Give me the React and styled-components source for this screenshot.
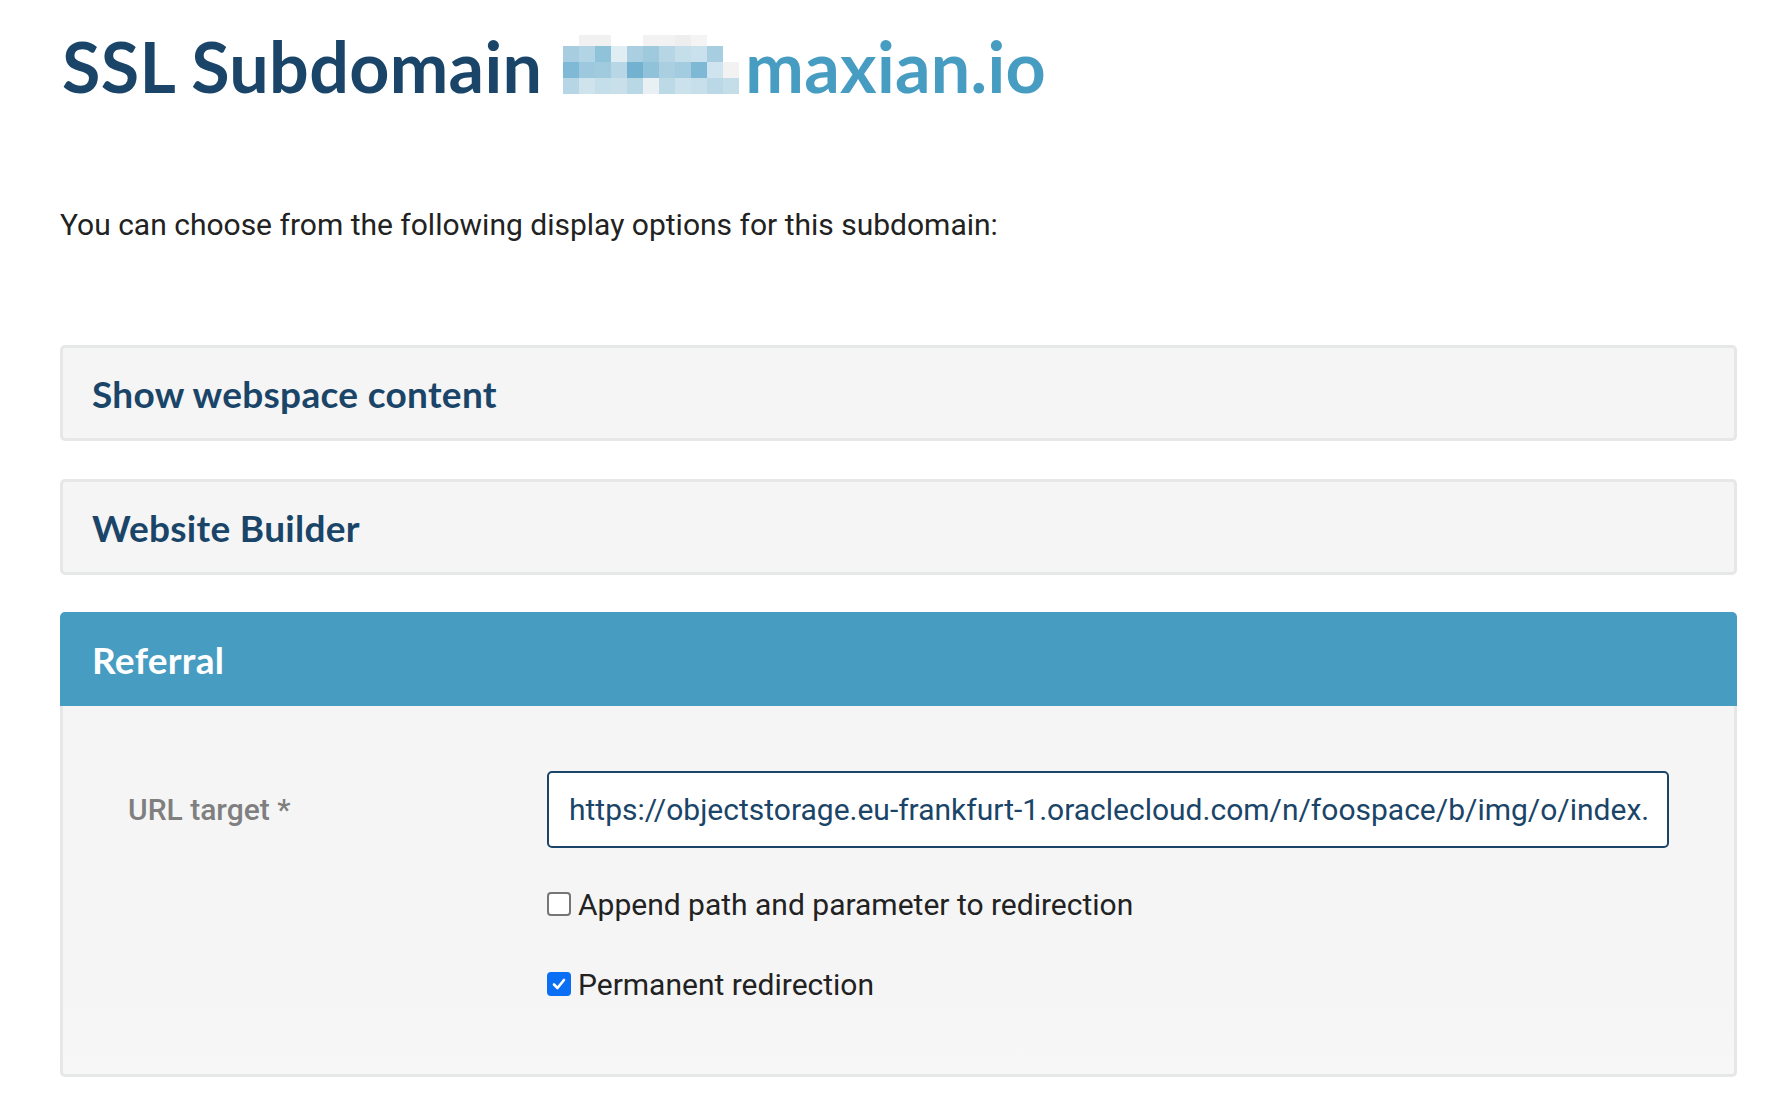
import React, { useState } from "react";
import styled, { createGlobalStyle } from "styled-components";

const GlobalStyle = createGlobalStyle`
  html, body {
    margin: 0;
    padding: 0;
    background: #ffffff;
  }
  body {
    font-family: Roboto, "Noto Sans", sans-serif;
    color: #222;
  }
`;

const Page = styled.div`
  padding: 0 41px 0 60px;
  display: flex;
  flex-direction: column;
`;

const Title = styled.h1`
  margin: 24px 0 0 2px;
  font-family: Lato, "Open Sans", sans-serif;
  font-weight: 700;
  font-size: 70px;
  line-height: 84px;
  color: #1a4568;
  display: flex;
  align-items: center;
  letter-spacing: 0.3px;
`;

const Domain = styled.span`
  color: #479cc2;
`;

const Mosaic = styled.span`
  display: grid;
  grid-template-columns: repeat(11, 16px);
  grid-auto-rows: 16px;
  margin: 0 6px 0 21px;
  transform: translateY(-4px);
`;

const Cell = styled.span`
  background: ${(p) => p.$c};
  height: ${(p) => (p.$short ? "11px" : "16px")};
  align-self: end;
`;

const Intro = styled.p`
  margin: 99px 0 0 0;
  font-size: 30px;
  line-height: 36px;
  color: #222;
`;

const Options = styled.div`
  margin-top: 102px;
  display: flex;
  flex-direction: column;
  gap: 38px;
`;

const Option = styled.div`
  background: #f5f5f5;
  border: 3px solid #e6e7e7;
  border-radius: 5px;
  height: 90px;
  display: flex;
  align-items: center;
  padding: 0 29px;
`;

const OptionTitle = styled.h2`
  margin: 0;
  font-family: Lato, "Open Sans", sans-serif;
  font-weight: 700;
  font-size: 37px;
  color: ${(p) => (p.$active ? "#ffffff" : "#1a4568")};
  letter-spacing: 0.3px;
`;

const ActiveOption = styled.div`
  border-radius: 5px 5px 0 0;
  overflow: hidden;
  margin-top: -1px;
`;

const ActiveHeader = styled.div`
  background: #479cc2;
  height: 94px;
  display: flex;
  align-items: center;
  padding: 0 32px;
`;

const ActiveBody = styled.div`
  background: linear-gradient(to bottom, #f5f5f5 80%, #f7f7f7 100%);
  border: 3px solid #e6e7e7;
  border-top: none;
  border-radius: 0 0 5px 5px;
  padding: 65px 65px 0 65px;
  height: 303px;
`;

const FormRow = styled.div`
  display: grid;
  grid-template-columns: 419px 1fr;
  align-items: start;
`;

const Label = styled.label`
  font-size: 30px;
  font-weight: 500;
  color: #7f7f7f;
  line-height: 77px;
`;

const Field = styled.div`
  display: flex;
  flex-direction: column;
`;

const TextInput = styled.input`
  box-sizing: border-box;
  height: 77px;
  width: 100%;
  border: 2px solid #1a4568;
  border-radius: 5px;
  background: #fff;
  padding: 0 20px;
  font-family: Roboto, "Noto Sans", sans-serif;
  font-size: 30px;
  color: #1a4568;
  outline: none;
`;

const CheckRow = styled.label`
  display: flex;
  align-items: center;
  gap: 7px;
  font-size: 30px;
  color: #222;
  height: 36px;
  margin-top: ${(p) => p.$gap}px;
  cursor: pointer;
`;

const Box = styled.span`
  box-sizing: border-box;
  width: 24px;
  height: 24px;
  border-radius: 4px;
  border: ${(p) => (p.$checked ? "none" : "2px solid #767676")};
  background: ${(p) => (p.$checked ? "#0b6ff6" : "#ffffff")};
  display: flex;
  align-items: center;
  justify-content: center;
  flex-shrink: 0;
`;

const mosaic = [
  ["transparent", "#f1f1f1", "#f1f1f1", "transparent", "transparent", "#f2f2f2", "#f2f2f2", "#eeeeee", "#f4f4f4", "transparent", "transparent"],
  ["#a8cde0", "#b3d4e4", "#8ec3da", "#e0eef4", "#a9cfe1", "#9fcadd", "#b6d6e5", "#c5dfea", "#c9e1ec", "#a6cde0", "transparent"],
  ["#7fb9d5", "#9dc8dd", "#a0cade", "#b8d7e6", "#73b1d1", "#90c2da", "#a9cfe1", "#a3cce0", "#7db8d4", "#cfe4ee", "#f2f2f2"],
  ["#b7d6e5", "#cfe3ec", "#c4deea", "#c9e0eb", "#b9d8e6", "#e8f0f4", "#bcd9e6", "#cbe1ec", "#c6dfea", "#bad8e6", "#c3dde9"],
];

const Check = () => (
  <svg width="16" height="16" viewBox="0 0 16 16">
    <path d="M3 8.5 L6.5 12 L13 4" fill="none" stroke="#fff" strokeWidth="2.6" strokeLinecap="round" strokeLinejoin="round" />
  </svg>
);

export default function App() {
  const [append, setAppend] = useState(false);
  const [permanent, setPermanent] = useState(true);

  return (
    <>
      <GlobalStyle />
      <Page>
        <Title>
          SSL Subdomain
          <Mosaic>
            {mosaic.map((row, r) =>
              row.map((c, i) => <Cell key={`${r}-${i}`} $c={c} $short={r === 0} />)
            )}
          </Mosaic>
          <Domain>maxian.io</Domain>
        </Title>
        <Intro>You can choose from the following display options for this subdomain:</Intro>
        <Options>
          <Option>
            <OptionTitle>Show webspace content</OptionTitle>
          </Option>
          <Option>
            <OptionTitle>Website Builder</OptionTitle>
          </Option>
          <ActiveOption>
            <ActiveHeader>
              <OptionTitle $active>Referral</OptionTitle>
            </ActiveHeader>
            <ActiveBody>
              <FormRow>
                <Label>URL target *</Label>
                <Field>
                  <TextInput
                    readOnly
                    value="https://objectstorage.eu-frankfurt-1.oraclecloud.com/n/foospace/b/img/o/index.html"
                  />
                  <CheckRow $gap={38} onClick={() => setAppend(!append)}>
                    <Box $checked={append}>{append && <Check />}</Box>
                    Append path and parameter to redirection
                  </CheckRow>
                  <CheckRow $gap={44} onClick={() => setPermanent(!permanent)}>
                    <Box $checked={permanent}>{permanent && <Check />}</Box>
                    Permanent redirection
                  </CheckRow>
                </Field>
              </FormRow>
            </ActiveBody>
          </ActiveOption>
        </Options>
      </Page>
    </>
  );
}
